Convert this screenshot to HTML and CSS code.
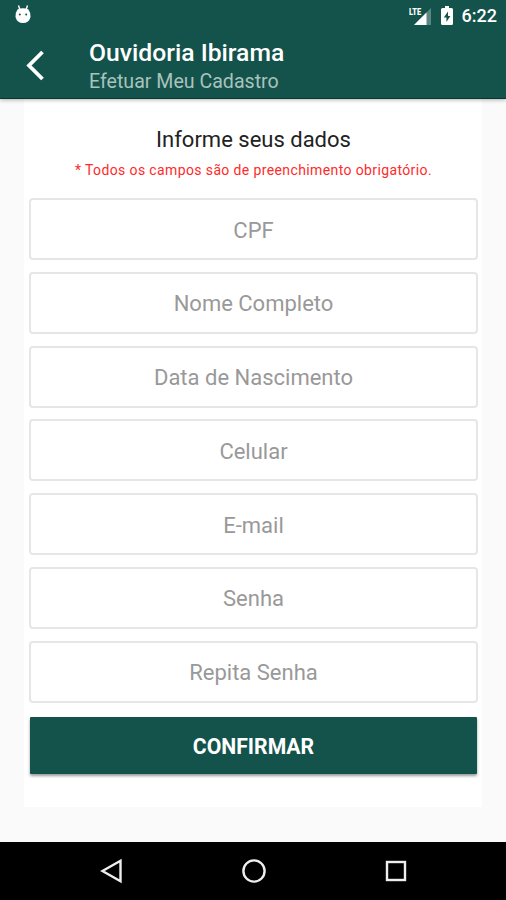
FILE: index.html
```
<!DOCTYPE html>
<html lang="pt-BR">

<head>
    <meta charset="UTF-8" />
    <meta name="viewport" content="width=device-width, initial-scale=1.0" />
    <title>Ouvidoria Ibirama</title>
    <link rel="stylesheet" href="styles.css">
</head>

<body>
    <header class="header">
        <!-- status bar -->
        <div class="status">
            <svg class="debug" width="18" height="20" viewBox="0 0 18 20">
                <path d="M4.5 1.5L6 6M13.5 1.5L12 6" stroke="#fff" stroke-width="1.4" />
                <path d="M3.5 5.5Q9 3 14.5 5.5Q17 9 16.5 13Q15 19 9 19Q3 19 1.5 13Q1 9 3.5 5.5Z" fill="#fff" />
                <circle cx="5.8" cy="10.5" r="1" fill="#14534b" />
                <circle cx="12.2" cy="10.5" r="1" fill="#14534b" />
            </svg>
            <svg class="signal" width="23" height="20" viewBox="0 0 23 20">
                <path d="M22 2V19H5Z" fill="#fff" fill-opacity=".3" />
                <path d="M17.5 6.5V19H5Z" fill="#fff" />
                <text x="0" y="9" textLength="12" lengthAdjust="spacingAndGlyphs">LTE</text>
            </svg>
            <svg class="battery" width="12" height="19" viewBox="0 0 12 19">
                <path d="M4 0H8V2H10.5Q12 2 12 3.5V17.5Q12 19 10.5 19H1.5Q0 19 0 17.5V3.5Q0 2 1.5 2H4Z" fill="#fff" />
                <path d="M7 5.5L2.8 11.5H5.4V16L9.4 10H7Z" fill="#14534b" />
            </svg>
            <span class="time">6:22</span>
        </div>
        <div class="toolbar">
            <svg class="back" width="20" height="32" viewBox="0 0 20 32">
                <path d="M17.5 3L4 16.5L17.5 30" fill="none" stroke="#fff" stroke-width="3.8" />
            </svg>
            <div class="titles">
                <h1>Ouvidoria Ibirama</h1>
                <h2>Efetuar Meu Cadastro</h2>
            </div>
        </div>
    </header>

    <main class="content">
        <form class="card">
            <p class="title">Informe seus dados</p>
            <p class="required">* Todos os campos são de preenchimento obrigatório.</p>
            <div class="fields">
                <input type="text" placeholder="CPF">
                <input type="text" placeholder="Nome Completo">
                <input type="text" placeholder="Data de Nascimento">
                <input type="tel" placeholder="Celular">
                <input type="email" placeholder="E-mail">
                <input type="password" placeholder="Senha">
                <input type="password" placeholder="Repita Senha">
            </div>
            <button type="button" class="confirm">CONFIRMAR</button>
        </form>
    </main>

    <!-- android buttons -->
    <nav class="navbar">
        <svg width="26" height="26" viewBox="0 0 26 26">
            <path d="M21.5 2.8V23.2L3.5 13Z" />
        </svg>
        <svg width="26" height="26" viewBox="0 0 26 26">
            <circle cx="13" cy="13" r="10.6" />
        </svg>
        <svg width="26" height="26" viewBox="0 0 26 26">
            <rect x="4" y="4" width="18" height="18" />
        </svg>
    </nav>
</body>

</html>
```

FILE: styles.css
```
* {
    margin: 0;
    padding: 0;
    box-sizing: border-box;
}

body {
    display: flex;
    flex-direction: column;
    height: 900px;
    font-family: Roboto, sans-serif;
    background: #fafafa;
    overflow: hidden;
}

.header {
    height: 99px;
    background: #14534b;
    border-bottom: 1px solid #07382f;
    box-shadow: 0 1px 4px rgba(0, 0, 0, .3);
    color: #fff;
    z-index: 1;
}

.status {
    display: flex;
    align-items: center;
    height: 31px;
    padding: 0 9px 0 14px;
}

.debug {
    margin-bottom: 3px;
}

.signal {
    margin-left: auto;
    margin-right: 9px;
}

.signal text {
    font-size: 9px;
    font-weight: 900;
    fill: #fff;
    stroke: #14534b;
    stroke-width: 1.5px;
    paint-order: stroke;
}

.battery {
    margin-right: 9px;
}

.time {
    font-size: 18px;
    font-weight: 500;
    line-height: 31px;
}

.toolbar {
    display: flex;
    align-items: flex-start;
    padding-left: 25px;
}

.back {
    margin-top: 18px;
}

.titles {
    margin-left: 44px;
    padding-top: 7px;
}

.titles h1 {
    font-size: 24.7px;
    font-weight: 500;
    line-height: 30px;
}

.titles h2 {
    font-size: 19.6px;
    font-weight: 400;
    line-height: 28px;
    color: #a9c2be;
}

.content {
    flex: 1;
    padding: 0 24px;
}

.card {
    height: 708px;
    padding: 27px 4px 0 5px;
    background: #fff;
    text-align: center;
}

.title {
    font-size: 22px;
    line-height: 28px;
    color: #222;
}

.required {
    margin-top: 8px;
    font-size: 14px;
    line-height: 17px;
    letter-spacing: .38px;
    color: #ff2a2a;
}

.fields {
    display: grid;
    gap: 11.8px;
    margin-top: 19px;
}

.fields input {
    width: 100%;
    height: 62px;
    padding-top: 2px;
    border: 2px solid #e6e6e6;
    border-radius: 4px;
    background: #fff;
    outline: none;
    font-family: inherit;
    font-size: 22px;
    text-align: center;
}

.fields input::placeholder {
    color: #999;
}

.confirm {
    display: block;
    width: 447px;
    height: 57px;
    margin: 14px 0 0 1px;
    padding-top: 3px;
    border: none;
    border-radius: 1px;
    background: #14534b;
    box-shadow: 0 2px 3px rgba(0, 0, 0, .4);
    color: #fff;
    font-family: inherit;
    font-size: 21.2px;
    font-weight: 700;
}

.navbar {
    display: flex;
    justify-content: space-between;
    align-items: center;
    height: 58px;
    padding: 0 97px 0 99px;
    background: #000;
}

.navbar svg {
    fill: none;
    stroke: #eee;
    stroke-width: 2.4;
}
```
